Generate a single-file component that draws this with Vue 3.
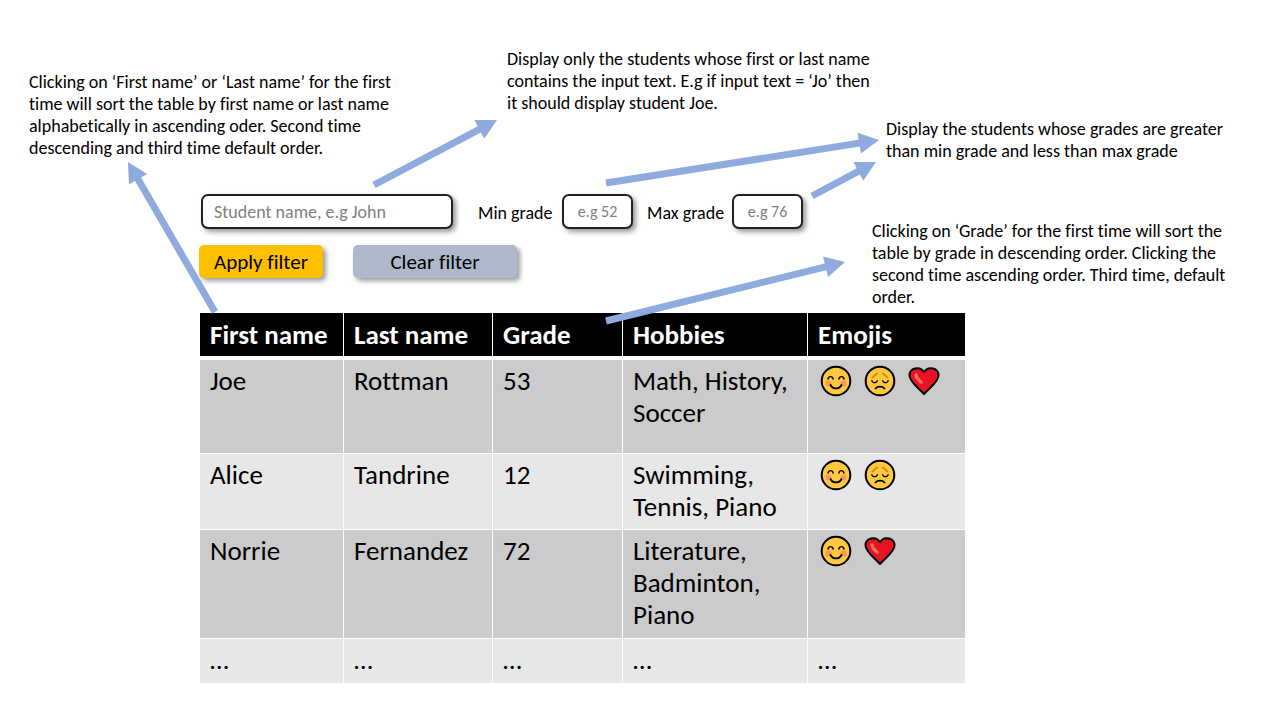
<script setup>
import { ref, computed } from 'vue'

const students = [
  { first: 'Joe', last: 'Rottman', grade: 53, hobbies: 'Math, History, Soccer', emojis: ['smile', 'sad', 'heart'] },
  { first: 'Alice', last: 'Tandrine', grade: 12, hobbies: 'Swimming, Tennis, Piano', emojis: ['smile', 'sad'] },
  { first: 'Norrie', last: 'Fernandez', grade: 72, hobbies: 'Literature, Badminton, Piano', emojis: ['smile', 'heart'] }
]
const rowSizes = { Joe: 'tall', Alice: 'short', Norrie: 'three' }

const name = ref('')
const min = ref('')
const max = ref('')
const applied = ref({ name: '', min: '', max: '' })
const sortKey = ref('')
const clicks = ref(0)

function apply() {
  applied.value = { name: name.value, min: min.value, max: max.value }
}
function clearFilter() {
  name.value = min.value = max.value = ''
  apply()
}
function sortBy(key) {
  clicks.value = sortKey.value === key ? (clicks.value + 1) % 3 : 1
  sortKey.value = key
}

const rows = computed(() => {
  const f = applied.value
  const list = students.filter(
    (s) =>
      (s.first + ' ' + s.last).toLowerCase().includes(f.name.toLowerCase()) &&
      (f.min === '' || s.grade > Number(f.min)) &&
      (f.max === '' || s.grade < Number(f.max))
  )
  if (clicks.value === 0) return list
  const key = sortKey.value
  const ascending = key === 'grade' ? clicks.value === 2 : clicks.value === 1
  return list.sort((a, b) => (a[key] > b[key] ? 1 : -1) * (ascending ? 1 : -1))
})

// Arrow outline from its tail to its tip.
function arrow([x1, y1, x2, y2]) {
  const len = Math.hypot(x2 - x1, y2 - y1)
  const ux = (x2 - x1) / len
  const uy = (y2 - y1) / len
  const at = (d, s) => `${x1 + ux * d - uy * s},${y1 + uy * d + ux * s}`
  const neck = len - 20
  return [at(0, -3.5), at(neck, -3.5), at(neck, -10.5), at(len, 0), at(neck, 10.5), at(neck, 3.5), at(0, 3.5)].join(' ')
}
const arrows = [
  [215, 312, 128, 162],
  [374, 185, 497, 120],
  [606, 183, 879, 140],
  [812, 196, 876, 162],
  [606, 321, 845, 262]
].map(arrow)
</script>

<template>
  <main class="page">
    <form class="filters" @submit.prevent="apply">
      <div class="fields">
        <input v-model="name" class="box name" type="text" aria-label="Student name" placeholder="Student name, e.g John" />
        <label class="min" for="min">Min grade</label>
        <input id="min" v-model="min" class="box grade" type="text" placeholder="e.g 52" />
        <label class="max" for="max">Max grade</label>
        <input id="max" v-model="max" class="box grade" type="text" placeholder="e.g 76" />
      </div>
      <div class="actions">
        <button class="btn apply" type="submit">Apply filter</button>
        <button class="btn clear" type="button" @click="clearFilter">Clear filter</button>
      </div>
    </form>

    <table class="students">
      <colgroup>
        <col class="c1" /><col class="c2" /><col class="c3" /><col class="c4" /><col class="c5" />
      </colgroup>
      <thead>
        <tr>
          <th><button type="button" @click="sortBy('first')">First name</button></th>
          <th><button type="button" @click="sortBy('last')">Last name</button></th>
          <th><button type="button" @click="sortBy('grade')">Grade</button></th>
          <th>Hobbies</th>
          <th>Emojis</th>
        </tr>
      </thead>
      <tbody>
        <tr v-for="s in rows" :key="s.first" :class="rowSizes[s.first]">
          <td>{{ s.first }}</td>
          <td>{{ s.last }}</td>
          <td>{{ s.grade }}</td>
          <td>{{ s.hobbies }}</td>
          <td>
            <div class="emojis">
              <svg v-for="e in s.emojis" :key="e" class="emoji" viewBox="0 0 32 32" fill="none" stroke-linecap="round" stroke-linejoin="round">
                <template v-if="e === 'smile'">
                  <circle cx="16" cy="16" r="14.3" fill="#ffc83d" stroke="#000" stroke-width="2" />
                  <circle cx="8.500" cy="18.500" r="3" fill="#f9975d" />
                  <circle cx="23.500" cy="18.500" r="3" fill="#f9975d" />
                  <path d="M8 14c.6-3.200 4.600-3.200 5.200 0M18.800 14c.6-3.200 4.600-3.200 5.200 0" stroke="#000" stroke-width="1.400" />
                  <path d="M10.500 20c2.400 4.600 8.600 4.600 11 0" stroke="#000" stroke-width="1.800" />
                </template>
                <template v-else-if="e === 'sad'">
                  <circle cx="16" cy="16" r="14.3" fill="#ffc83d" stroke="#000" stroke-width="2" />
                  <path d="M8.500 12.500L13 8.500M23.500 12.500L19 8.500" stroke="#d68d0c" stroke-width="2" />
                  <path d="M7.800 15.800c1 2.600 4.600 2.600 5.600 0M18.600 15.800c1 2.600 4.600 2.600 5.600 0" stroke="#000" stroke-width="1.400" />
                  <path d="M11.500 23.500c2-2.400 7-2.400 9 0" stroke="#000" stroke-width="1.700" />
                </template>
                <template v-else>
                  <path d="M16 29C11 23 1.500 17 1.500 10.500C1.500 3 11.500.500 16 7C20.500.500 30.500 3 30.500 10.500C30.500 17 21 23 16 29Z" fill="#e81224" stroke="#000" stroke-width="2" />
                  <path d="M8 10c.5 3.500 2.500 5 5.200 7.200" stroke="#f26d5b" stroke-width="3.400" />
                </template>
              </svg>
            </div>
          </td>
        </tr>
        <tr class="more">
          <td v-for="n in 5" :key="n">…</td>
        </tr>
      </tbody>
    </table>

    <svg class="arrows" width="1268" height="725" aria-hidden="true">
      <polygon v-for="(points, i) in arrows" :key="i" :points="points" fill="#8faadc" />
    </svg>

    <p class="note sort-name">Clicking on ‘First name’ or ‘Last name’ for the first time will sort the table by first name or last name alphabetically in ascending oder. Second time descending and third time default order.</p>
    <p class="note filter-name">Display only the students whose first or last name contains the input text. E.g if input text = ‘Jo’ then it should display student Joe.</p>
    <p class="note filter-grade">Display the students whose grades are greater than min grade and less than max grade</p>
    <p class="note sort-grade">Clicking on ‘Grade’ for the first time will sort the table by grade in descending order. Clicking the second time ascending order. Third time, default order.</p>
  </main>
</template>

<style>
body {
  margin: 0;
  background: #fff;
}
</style>

<style scoped>
.page {
  position: relative;
  box-sizing: border-box;
  padding: 194px 303px 40px 200px;
  color: #000;
  font-family: Carlito, Lato, "Noto Sans", sans-serif;
  font-size: 18px;
  font-variant-ligatures: none;
}
input,
button {
  font-family: inherit;
  font-variant-ligatures: none;
  box-sizing: border-box;
}
.fields {
  display: flex;
  align-items: center;
}
.box {
  height: 35px;
  border: 2px solid #222;
  border-radius: 7px;
  background: #fff;
  box-shadow: 3px 3px 5px rgba(0, 0, 0, 0.4);
  color: #000;
}
.box::placeholder {
  color: #7f7f7f;
  opacity: 1;
}
.name {
  width: 252px;
  margin-left: 1px;
  padding: 0 11px;
  font-size: 18px;
}
.grade {
  width: 71px;
  padding: 0;
  font-size: 16px;
  text-align: center;
}
label {
  padding-top: 2px;
  white-space: nowrap;
}
.min {
  width: 84px;
  margin-left: 25px;
}
.max {
  width: 85px;
  margin-left: 14px;
}
.actions {
  display: flex;
  gap: 30px;
  margin: 16px 0 35px -1px;
}
.btn {
  height: 33px;
  padding: 0;
  border: 0;
  border-radius: 5px;
  box-shadow: 3px 3px 5px rgba(0, 0, 0, 0.4);
  color: #000;
  font-size: 21px;
}
.apply {
  width: 124px;
  background: #ffc000;
}
.clear {
  width: 164px;
  background: #adb9ca;
}
.students {
  width: 100%;
  table-layout: fixed;
  border-collapse: separate;
  border-spacing: 0;
  font-size: 27px;
  line-height: 32px;
}
.c1 { width: 144px; }
.c2 { width: 149px; }
.c3 { width: 130px; }
.c4 { width: 185px; }
th,
td {
  box-sizing: border-box;
  padding: 5px 10px 4px;
  border-right: 1px solid #fff;
  border-bottom: 1px solid #fff;
  text-align: left;
  vertical-align: top;
}
th:last-child,
td:last-child {
  border-right: 0;
}
th {
  height: 47px;
  padding-top: 6px;
  border-bottom-width: 4px;
  background: #000;
  color: #fff;
  font-weight: 700;
  white-space: nowrap;
}
th button {
  padding: 0;
  border: 0;
  background: none;
  color: inherit;
  font-size: inherit;
  font-weight: inherit;
  line-height: inherit;
}
td {
  background: #e7e7e7;
}
tbody tr:nth-child(odd) td {
  background: #cbcbcb;
}
.tall td { height: 94px; }
.short td { height: 76px; }
.three td { height: 109px; }
.more td { height: 45px; }
.emojis {
  display: flex;
  gap: 12px;
  padding-left: 2px;
}
.emoji {
  width: 32px;
  height: 32px;
}
.arrows {
  position: absolute;
  top: 0;
  left: 0;
  pointer-events: none;
}
.note {
  position: absolute;
  margin: 0;
  line-height: 22px;
}
.sort-name {
  top: 71px;
  left: 29px;
  width: 372px;
}
.filter-name {
  top: 48px;
  left: 507px;
  width: 372px;
}
.filter-grade {
  top: 118px;
  left: 886px;
  width: 350px;
}
.sort-grade {
  top: 220px;
  left: 872px;
  width: 362px;
}
</style>
